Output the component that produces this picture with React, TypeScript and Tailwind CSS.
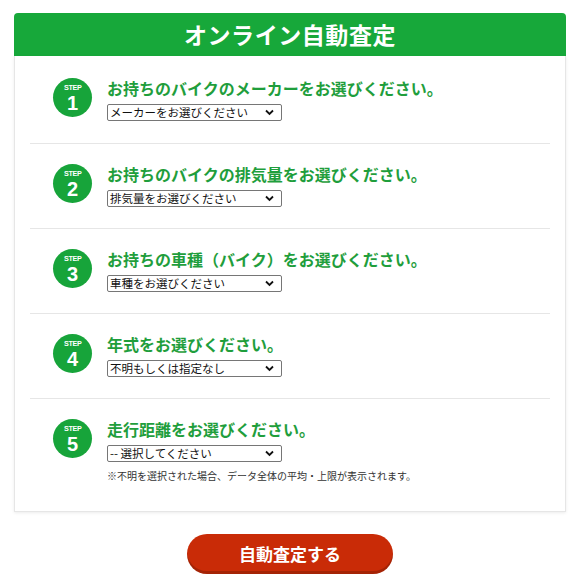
import React from "react";

interface Step {
  no: number;
  title: string;
  placeholder: string;
  note?: string;
}

const steps: Step[] = [
  { no: 1, title: "お持ちのバイクのメーカーをお選びください。", placeholder: "メーカーをお選びください" },
  { no: 2, title: "お持ちのバイクの排気量をお選びください。", placeholder: "排気量をお選びください" },
  { no: 3, title: "お持ちの車種（バイク）をお選びください。", placeholder: "車種をお選びください" },
  { no: 4, title: "年式をお選びください。", placeholder: "不明もしくは指定なし" },
  {
    no: 5,
    title: "走行距離をお選びください。",
    placeholder: "-- 選択してください",
    note: "※不明を選択された場合、データ全体の平均・上限が表示されます。",
  },
];

const font = { fontFamily: '"Noto Sans CJK JP", "Noto Sans", sans-serif' };

const StepBadge: React.FC<{ no: number }> = ({ no }) => (
  <div className="w-[39px] h-[39px] shrink-0 rounded-full bg-[#17a43a] flex flex-col items-center justify-center text-white">
    <span className="text-[8px] font-bold leading-none tracking-tighter font-['Liberation_Sans',sans-serif] mt-[1px] scale-x-90">
      STEP
    </span>
    <span className="text-[20px] font-bold leading-none mt-[1px] font-['Liberation_Sans',sans-serif]">
      {no}
    </span>
  </div>
);

const App: React.FC = () => {
  return (
    <div className="w-[580px] h-[588px] bg-white pt-[13px] px-[14px]" style={font}>
      <div className="rounded-t-[4px] bg-[#17a83a] h-[43px] flex items-center justify-center">
        <h1 className="text-white text-[23px] font-bold tracking-wide leading-none">
          オンライン自動査定
        </h1>
      </div>
      <div className="border-x border-b border-[#e6e6e6] shadow-[0_1px_3px_rgba(0,0,0,0.08)] px-[15px] h-[456px]">
        {steps.map((s, i) => (
          <div
            key={s.no}
            className={`flex items-start pl-[23px] ${i === 0 ? "pt-[22px] h-[88px]" : "pt-[20px] h-[85px]"} ${
              i < steps.length - 1 ? "border-b border-[#e6e6e6]" : ""
            }`}
          >
            <StepBadge no={s.no} />
            <div className="ml-[15px] -mt-[1px]">
              <p className="text-[#1f9e3c] text-[16px] font-bold leading-[22px]">{s.title}</p>
              <div className="mt-[5px] relative w-[175px] h-[17px] border border-[#767676] rounded-[2px] bg-white flex items-center">
                <span className="text-[11.5px] text-[#111] pl-[2px] leading-none">{s.placeholder}</span>
                <svg
                  className="absolute right-[7px] top-[4px]"
                  width="9"
                  height="7"
                  viewBox="0 0 9 7"
                  fill="none"
                  stroke="#111"
                  strokeWidth="1.8"
                >
                  <path d="M1 1.5l3.5 3.5L8 1.5" />
                </svg>
              </div>
              {s.note && (
                <p className="mt-[9px] text-[10px] text-[#333] leading-none">{s.note}</p>
              )}
            </div>
          </div>
        ))}
      </div>
      <div className="flex justify-center mt-[22px]">
        <button className="w-[206px] h-[40px] rounded-full bg-[#c92b07] shadow-[inset_0_-3px_0_rgba(0,0,0,0.18)] text-white text-[17px] font-bold">
          自動査定する
        </button>
      </div>
    </div>
  );
};

export default App;
